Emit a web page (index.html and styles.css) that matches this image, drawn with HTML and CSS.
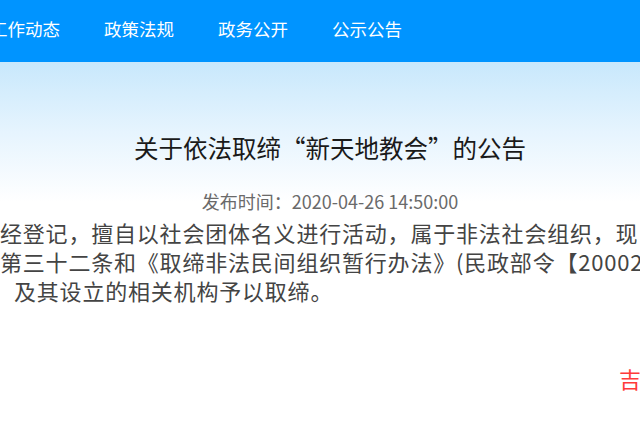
FILE: index.html
```html
<!DOCTYPE html>
<html lang="zh-CN">
<head>
<meta charset="utf-8">
<title>关于依法取缔“新天地教会”的公告</title>
<link rel="stylesheet" href="styles.css">
</head>
<body>
<header class="topbar">
  <nav class="nav">
    <a class="nav-item" href="#">工作动态</a>
    <a class="nav-item" href="#">政策法规</a>
    <a class="nav-item" href="#">政务公开</a>
    <a class="nav-item" href="#">公示公告</a>
  </nav>
</header>
<main class="main">
  <div class="head">
    <h1 class="title">关于依法取缔“新天地教会”的公告</h1>
    <div class="date">发布时间：2020-04-26 14:50:00</div>
  </div>
  <div class="article">
    <p class="line">经登记，擅自以社会团体名义进行活动，属于非法社会组织，现</p>
    <p class="line">第三十二条和《取缔非法民间组织暂行办法》(民政部令【20002</p>
    <p class="line line-last">及其设立的相关机构予以取缔。</p>
    <p class="sign">吉林省民政厅</p>
  </div>
</main>
</body>
</html>
```
FILE: styles.css
```css
html, body {
  margin: 0;
  padding: 0;
  background: #fff;
  overflow: hidden;
  width: 640px;
  height: 426px;
}
body {
  font-family: "Noto Sans CJK SC", "Microsoft YaHei", sans-serif;
}
.topbar {
  height: 62px;
  background: #0094ff;
  overflow: hidden;
}
.nav {
  display: flex;
  gap: 44px;
  margin-left: -10px;
  height: 62px;
  align-items: center;
  padding-bottom: 4px;
  box-sizing: border-box;
}
.nav-item {
  color: #fff;
  font-size: 17.5px;
  text-decoration: none;
  white-space: nowrap;
  line-height: 24px;
}
.main {
  background: linear-gradient(to bottom, #c8e8fc 0px, #e6f4fe 70px, #ffffff 140px, #ffffff 100%);
  padding-top: 69px;
  height: 364px;
  box-sizing: border-box;
}
.head {
  width: 660px;
  text-align: center;
}
.title {
  margin: 0;
  font-size: 24.5px;
  font-weight: normal;
  color: #1a1a1a;
  line-height: 34px;
  white-space: nowrap;
}
.date {
  margin-top: 24px;
  font-size: 18px;
  color: #6a6a6a;
  line-height: 25px;
  white-space: nowrap;
}
.article {
  margin-top: 4px;
  color: #444;
  font-size: 22px;
  letter-spacing: 0.8px;
}
.line {
  margin: 0;
  line-height: 29px;
  white-space: nowrap;
}
.line-last {
  padding-left: 14px;
}
.sign {
  margin: 59px 0 0;
  padding-left: 619px;
  line-height: 29px;
  color: #ff3a3a;
  white-space: nowrap;
}
```
